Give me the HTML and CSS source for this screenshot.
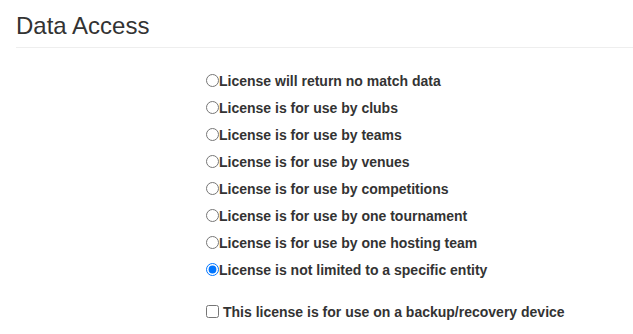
FILE: index.html
```html
<!DOCTYPE html>
<html lang="en">
<head>
    <meta charset="UTF-8">
    <title>Data Access</title>
    <link rel="stylesheet" href="styles.css">
</head>
<body>
    <div class="page">
        <h3 class="section-title">Data Access</h3>

        <form class="access-form">
            <div class="radio-list">
                <label class="radio-row"><input type="radio" name="access">License will return no match data</label>
                <label class="radio-row"><input type="radio" name="access">License is for use by clubs</label>
                <label class="radio-row"><input type="radio" name="access">License is for use by teams</label>
                <label class="radio-row"><input type="radio" name="access">License is for use by venues</label>
                <label class="radio-row"><input type="radio" name="access">License is for use by competitions</label>
                <label class="radio-row"><input type="radio" name="access">License is for use by one tournament</label>
                <label class="radio-row"><input type="radio" name="access">License is for use by one hosting team</label>
                <label class="radio-row"><input type="radio" name="access" checked>License is not limited to a specific entity</label>
            </div>

            <label class="check-row"><input type="checkbox"> This license is for use on a backup/recovery device</label>
        </form>
    </div>
</body>
</html>
```

FILE: styles.css
```css
body {
    margin: 0;
    font-family: "Liberation Sans", Arial, sans-serif;
    font-size: 14px;
    color: #333;
    background-color: #fff;
}

.page {
    padding: 0 0 0 16px;
}

.section-title {
    margin: 0;
    padding: 13px 0 8px;
    font-size: 24px;
    font-weight: 400;
    line-height: 1.1;
    border-bottom: 1px solid #eee;
}

.access-form {
    padding: 19px 0 0 189px;
}

.radio-list {
    display: flex;
    flex-direction: column;
}

.radio-row,
.check-row {
    display: flex;
    align-items: center;
    height: 27px;
    font-weight: 700;
}

.radio-row input {
    width: 13px;
    height: 13px;
    margin: 0 0 0 1px;
}

.check-row {
    margin-top: 15px;
}

.check-row input {
    width: 13px;
    height: 13px;
    margin: 0 4px 0 1px;
}
```
